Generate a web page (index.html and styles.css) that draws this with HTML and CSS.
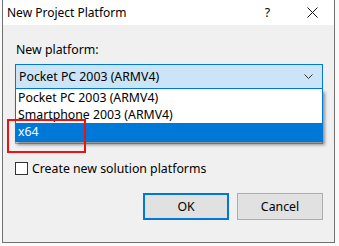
FILE: index.html
```html
<!DOCTYPE html>
<html lang="en">
<head>
  <meta charset="UTF-8" />
  <title>New Project Platform</title>
  <link rel="stylesheet" href="styles.css">
</head>
<body>

<div class="window">
  <div class="titlebar">
    <span class="title">New Project Platform</span>
    <span class="help">?</span>
    <svg class="close" width="11" height="11" viewBox="0 0 11 11">
      <path d="M0.5 0.5 L10.5 10.5 M10.5 0.5 L0.5 10.5" stroke="#111" stroke-width="1" fill="none"/>
    </svg>
  </div>

  <div class="content">
    <div class="label">New platform:</div>
    <div class="combo-wrap">
      <div class="combo">
        <span>Pocket PC 2003 (ARMV4)</span>
        <svg class="chevron" width="9" height="5" viewBox="0 0 9 5">
          <path d="M0.5 0.5 L4.5 4.5 L8.5 0.5" stroke="#333" stroke-width="1" fill="none"/>
        </svg>
      </div>
      <ul class="droplist">
        <li>Pocket PC 2003 (ARMV4)</li>
        <li>Smartphone 2003 (ARMV4)</li>
        <li class="selected">x64</li>
      </ul>
    </div>

    <div class="combo2"></div>

    <label class="check">
      <span class="box"></span>
      Create new solution platforms
    </label>

    <div class="buttons">
      <button class="btn default">OK</button>
      <button class="btn">Cancel</button>
    </div>
  </div>
</div>

<div class="marker"></div>

</body>
</html>
```

FILE: styles.css
```css
body {
  margin: 0;
  background: #fafafa;
  font-family: "Noto Sans", "Open Sans", sans-serif;
  font-size: 12.3px;
  color: #000;
  position: relative;
}
.window {
  margin-left: 2px;
  width: 331px;
  height: 242px;
  border: 1px solid #707070;
  border-top: none;
  background: #f0f0f0;
}
.titlebar {
  height: 25px;
  background: #fff;
  display: flex;
  align-items: center;
}
.title {
  padding-left: 4px;
  flex: 1;
  font-size: 12px;
}
.help {
  margin-right: 37px;
}
.close {
  margin-right: 16px;
}
.content {
  padding: 17px 11px 0 12px;
}
.label {
  line-height: 16px;
  padding-left: 1px;
}
.combo-wrap {
  position: relative;
  margin-top: 6px;
}
.combo {
  height: 23px;
  border: 1px solid #0078d7;
  background: #cce4f7;
  display: flex;
  align-items: center;
  padding: 0 9px 0 3px;
}
.combo span {
  flex: 1;
}
.droplist {
  position: absolute;
  left: 0;
  right: 0;
  top: 25px;
  margin: 0;
  padding: 0;
  list-style: none;
  background: #fff;
  border: 1px solid #0078d7;
  border-top: none;
  box-shadow: 2px 3px 3px rgba(0, 0, 0, 0.4);
  z-index: 2;
}
.droplist li {
  height: 17px;
  line-height: 17px;
  padding-left: 2px;
}
.droplist li.selected {
  background: #0078d7;
  color: #fff;
  height: 18px;
}
.combo2 {
  margin-top: 31px;
  height: 22px;
  border: 1px solid #adadad;
  background: #f0f0f0;
}
.check {
  margin-top: 18px;
  display: flex;
  align-items: center;
  gap: 4px;
  height: 13px;
}
.box {
  width: 11px;
  height: 11px;
  border: 1px solid #333;
  background: #fff;
}
.buttons {
  margin-top: 18px;
  display: flex;
  justify-content: flex-end;
  gap: 8px;
}
.btn {
  width: 86px;
  height: 27px;
  background: #e1e1e1;
  border: 1px solid #adadad;
  font-family: inherit;
  font-size: 12.3px;
  color: #000;
  padding: 0;
}
.btn.default {
  border: 2px solid #0078d7;
}
.marker {
  position: absolute;
  left: 7px;
  top: 119px;
  width: 75px;
  height: 30px;
  border: 2px solid #ee1111;
  z-index: 3;
}
```
